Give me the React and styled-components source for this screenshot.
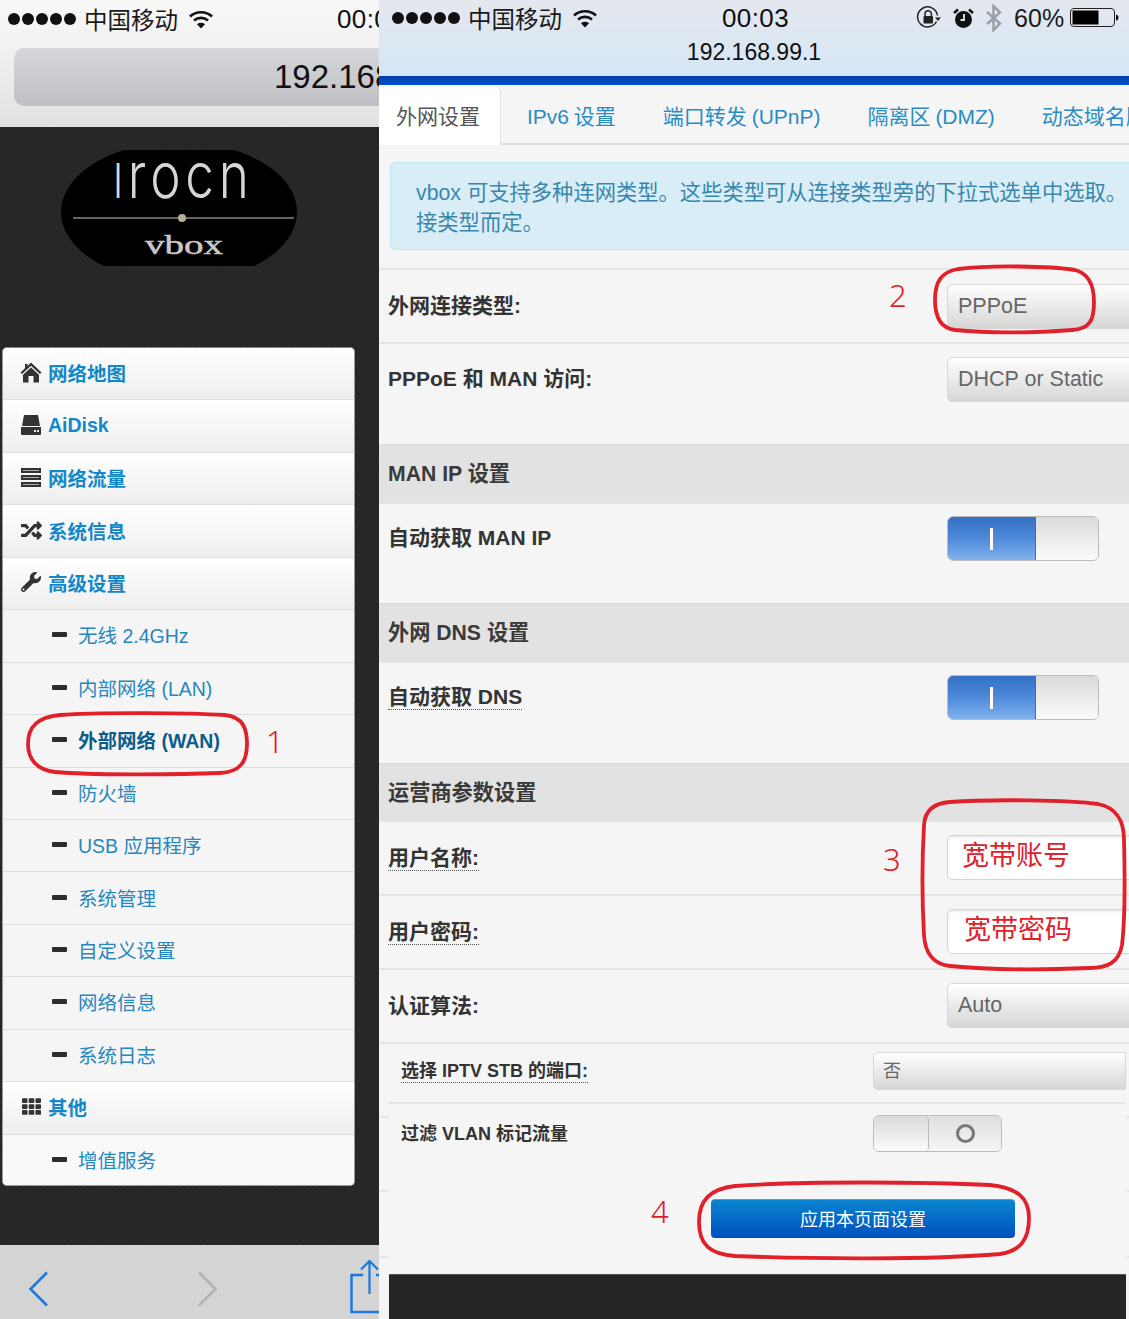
import React from 'react';
import styled, { createGlobalStyle } from 'styled-components';
import { FaRandom, FaWrench, FaTh } from 'react-icons/fa';

const SANS = `"Liberation Sans", "Noto Sans CJK SC", sans-serif`;
const RED = '#e0202a';

const GlobalStyle = createGlobalStyle`
  html, body {
    margin: 0;
    padding: 0;
    background: #f5f5f5;
    overflow: hidden;
  }
  * { box-sizing: border-box; }
`;

const Page = styled.div`
  position: relative;
  display: flex;
  width: 1129px;
  height: 1319px;
  overflow: hidden;
  font-family: ${SANS};
  color: #333;
`;

/* ---------- left phone ---------- */
const LeftPhone = styled.section`
  display: flex;
  flex-direction: column;
  flex: 0 0 379px;
  width: 379px;
  height: 1319px;
  overflow: hidden;
`;
const LeftHeader = styled.header`
  flex: 0 0 127px;
  padding-left: 14px;
  background: linear-gradient(#f8f8f8, #f1f1f1 40%, #e1e1e1);
`;
const StatusRow = styled.div`
  display: flex;
  align-items: center;
  height: 38px;
  margin-left: ${(p) => p.$offset || 0}px;
  white-space: nowrap;
`;
const Dots = styled.span`
  display: flex;
  gap: 2px;
`;
const Dot = styled.i`
  display: block;
  width: 12px;
  height: 12px;
  border-radius: 50%;
  background: #111;
`;
const Carrier = styled.span`
  margin-left: 8px;
  font-size: 23.5px;
  color: #1a1a1a;
`;
const WifiWrap = styled.span`
  display: flex;
  margin-left: 11px;
`;
const Clock = styled.span`
  font-size: 26px;
  font-weight: 500;
  letter-spacing: 0.4px;
  color: #111;
  margin-left: ${(p) => p.$left || 0}px;
`;
const UrlPill = styled.div`
  height: 58px;
  margin-top: 10px;
  width: 500px;
  padding-left: 260px;
  border-radius: 10px 0 0 10px;
  background: linear-gradient(#d6d7da, #bfc0c5);
  font-size: 33px;
  line-height: 58px;
  color: #111;
`;
const DarkBody = styled.div`
  flex: 1;
  padding: 23px 24px 0 2px;
  background-color: #252525;
  background-image: repeating-linear-gradient(45deg, rgba(255, 255, 255, 0.018) 0 2px, transparent 2px 4px);
`;
const LogoWrap = styled.div`
  display: flex;
  height: 197px;
  padding-left: 57px;
`;
const NavCard = styled.nav`
  display: flex;
  flex-direction: column;
  width: 353px;
  height: 839px;
  border: 1px solid #9a9a9a;
  border-top-color: #888;
  border-radius: 5px;
  overflow: hidden;
  background: #f5f5f5;
`;
const NavRow = styled.a`
  display: flex;
  align-items: center;
  flex: 0 0 52.45px;
  padding: 0 0 2px ${(p) => (p.$sub ? 49 : 16)}px;
  border-bottom: 1px solid #dedede;
  background: ${(p) => (p.$sub ? '#f5f5f5' : 'linear-gradient(#ffffff, #eeeeee)')};
  font-size: 19.5px;
  font-weight: ${(p) => (p.$sub && !p.$active ? 400 : 700)};
  color: ${(p) => (p.$active ? '#0c5c8c' : p.$sub ? '#2787c0' : '#1388c9')};

  &:last-child {
    background: #f9f9f9;
    border-bottom: none;
  }
`;
const NavIcon = styled.span`
  display: flex;
  justify-content: center;
  flex: 0 0 24px;
  margin-right: 5px;
  color: #333;
`;
const SubDash = styled.i`
  display: block;
  flex: 0 0 15px;
  height: 5px;
  margin-right: 11px;
  border-radius: 1px;
  background: #2c2c2c;
`;
const BottomBar = styled.footer`
  display: flex;
  align-items: flex-start;
  flex: 0 0 74px;
  padding: 15px 0 0 28px;
  background: #d4d4d4;
`;
const BackBtn = styled.span`
  display: flex;
  margin: ${(p) => p.$top}px ${(p) => p.$right}px 0 0;
`;

/* ---------- right phone ---------- */
const RightPhone = styled.section`
  display: flex;
  flex-direction: column;
  flex: 0 0 750px;
  width: 750px;
  height: 1319px;
  overflow: hidden;
  background: #f5f5f5;
`;
const RightHeader = styled.header`
  flex: 0 0 76px;
  background: linear-gradient(#e4e8ee, #d6e6f6);
`;
const RightStatus = styled.div`
  display: flex;
  align-items: center;
  height: 36px;
  padding-left: 13px;
  white-space: nowrap;
`;
const RightIcons = styled.span`
  display: flex;
  align-items: center;
  margin-left: 127px;
`;
const IconGap = styled.span`
  flex: 0 0 11px;
`;
const Percent = styled.span`
  margin: 0 6px 0 11px;
  font-size: 25px;
  color: #1a1a1a;
`;
const Address = styled.div`
  font-size: 23px;
  line-height: 32px;
  text-align: center;
  color: #111;
`;
const BlueBar = styled.div`
  flex: 0 0 9px;
  background: linear-gradient(#0340a8, #0450cc);
`;
const Tabs = styled.div`
  display: flex;
  flex: 0 0 60px;
  gap: 1px;
  padding-top: 2px;
  border-bottom: 2px solid #dedede;
  white-space: nowrap;
`;
const Tab = styled.a`
  display: block;
  padding: ${(p) => (p.$active ? '4px 20px 0 17px' : '4px 23px 0')};
  margin-right: ${(p) => (p.$active ? 2 : 0)}px;
  margin-bottom: ${(p) => (p.$active ? -2 : 0)}px;
  border-radius: 0 6px 0 0;
  background: ${(p) => (p.$active ? '#fff' : 'transparent')};
  border-right: ${(p) => (p.$active ? '1px solid #e2e2e2' : 'none')};
  font-size: 21px;
  word-spacing: -1px;
  line-height: 52px;
  color: ${(p) => (p.$active ? '#555' : '#2a8cc4')};
`;
const Alert = styled.div`
  flex: 0 0 88px;
  width: 900px;
  margin: 17px 0 18px 11px;
  padding: 15px 0 0 25px;
  border: 1px solid #bce8f1;
  border-radius: 5px;
  background: #d9edf7;
  font-size: 21.3px;
  line-height: 30px;
  color: #3a87ad;
`;
const FormRow = styled.div`
  display: grid;
  grid-template-columns: 559px 240px;
  flex: 0 0 ${(p) => p.$height}px;
  padding: ${(p) => p.$top}px 0 0 9px;
  border-top: 2px solid #e4e4e4;
`;
const Label = styled.div`
  align-self: start;
  height: 45px;
  font-size: 21px;
  font-weight: 700;
  line-height: ${(p) => p.$line || 43}px;
  color: #333;
`;
const Hint = styled.span`
  border-bottom: 1px dotted #555;
  padding-bottom: 1px;
`;
const SectionHead = styled.div`
  flex: 0 0 ${(p) => p.$height}px;
  padding-left: 9px;
  border-top: 2px solid #dcdcdc;
  background: #e2e2e2;
  font-size: 21.2px;
  font-weight: 700;
  line-height: ${(p) => p.$height - 2}px;
  color: #3a3a3a;
`;
const SelectBox = styled.div`
  width: ${(p) => p.$width || 240}px;
  height: ${(p) => p.$height || 45}px;
  padding-left: ${(p) => p.$pad || 10}px;
  border: 1px solid #d8d8d8;
  border-radius: 5px 0 0 5px;
  background: linear-gradient(#ffffff, #d6d6d6);
  font-size: ${(p) => p.$size || 21.5}px;
  line-height: ${(p) => (p.$height || 45) - 2}px;
  color: #666;
`;
const TextField = styled.div`
  width: 240px;
  height: 45px;
  padding-left: ${(p) => p.$pad}px;
  border: 1px solid #d4d4d4;
  border-radius: 5px 0 0 5px;
  background: #fff;
  box-shadow: inset 0 2px 2px rgba(0, 0, 0, 0.08);
  font-size: 27px;
  line-height: 40px;
  color: ${RED};
`;
const Switch = styled.div`
  display: flex;
  width: ${(p) => p.$width}px;
  height: ${(p) => p.$height}px;
  border: 1px solid #bcbcbc;
  border-radius: 6px;
  overflow: hidden;
`;
const SwitchOn = styled.div`
  display: flex;
  align-items: center;
  justify-content: center;
  flex: 0 0 88px;
  background: linear-gradient(#3471c4, #4d88d8 48%, #80b2ec);
  border-right: 1px solid #3d6fa8;
`;
const OnBar = styled.i`
  display: block;
  width: 3px;
  height: 22px;
  background: #fff;
`;
const Knob = styled.div`
  flex: ${(p) => (p.$grow ? 1 : '0 0 55px')};
  background: linear-gradient(#dadada, #fbfbfb);
  border-right: ${(p) => (p.$grow ? 'none' : '1px solid #bbb')};
  border-radius: 0 4px 4px 0;
`;
const SwitchOff = styled.div`
  display: flex;
  align-items: center;
  justify-content: center;
  flex: 1;
  background: linear-gradient(#dedede, #f6f6f6);
`;
const OffRing = styled.i`
  display: block;
  width: 19px;
  height: 19px;
  border: 3px solid #777;
  border-radius: 50%;
`;
const LowerArea = styled.div`
  display: flex;
  flex-direction: column;
  flex: 1;
  padding: 0 3px 0 10px;
  border-top: 2px solid #e4e4e4;
  background-image: linear-gradient(#e6e6e6, #e6e6e6), linear-gradient(#e6e6e6, #e6e6e6), linear-gradient(#e6e6e6, #e6e6e6);
  background-size: 100% 2px;
  background-repeat: no-repeat;
  background-position: 0 72px, 0 146px, 0 212px;
`;
const InnerPanel = styled.div`
  flex: 0 0 230px;
  background: #f5f5f5;
`;
const InnerRow = styled.div`
  display: grid;
  grid-template-columns: 472px 1fr;
  height: ${(p) => p.$height}px;
  padding: ${(p) => p.$top}px 0 0 12px;
  border-bottom: ${(p) => (p.$line ? '2px solid #e4e4e4' : 'none')};
`;
const InnerLabel = styled.div`
  font-size: 18px;
  font-weight: 700;
  line-height: 38px;
  color: #333;
`;
const ApplyRow = styled.div`
  display: flex;
  padding: 37px 0 0 322px;
`;
const ApplyButton = styled.button`
  width: 304px;
  height: 39px;
  padding: 0 0 2px;
  border: none;
  border-top: 1px solid #4aa0dc;
  border-radius: 4px;
  background: linear-gradient(#0a84cf, #0050c0);
  font-family: ${SANS};
  font-size: 18px;
  color: #fff;
`;
const DarkFooter = styled.div`
  flex: 1;
  background: #252525;
  border-top: 1px solid #555;
`;

/* ---------- annotations, drawn over the screenshots ---------- */
const Marks = styled.svg`
  position: absolute;
  left: 0;
  top: 0;
  pointer-events: none;
`;
const Note = styled.span`
  position: absolute;
  left: ${(p) => p.$x}px;
  top: ${(p) => p.$y}px;
  font-family: "Noto Sans", sans-serif;
  font-size: 31px;
  font-weight: 300;
  line-height: 36px;
  color: ${RED};
`;

const Wifi = () => (
  <svg width="24" height="19" viewBox="0 0 24 19">
    <path d="M1 6.5C7 0.8 17 0.8 23 6.5" fill="none" stroke="#111" strokeWidth="2.6" />
    <path d="M5 10.5C9 7 15 7 19 10.5" fill="none" stroke="#111" strokeWidth="2.6" />
    <path d="M8 14.2L12 18.5L16 14.2C13.5 12.4 10.5 12.4 8 14.2Z" fill="#111" />
  </svg>
);

const HomeIcon = () => (
  <svg width="22" height="21" viewBox="0 0 22 21" fill="#333">
    <path d="M11 0.5L21.500 10.500L20 12L11 3.800L2 12L0.500 10.500L5 6.200V2H7.500V3.900Z" />
    <path d="M11 5.500L19 12.800V20.500H13.500V14H8.500V20.500H3V12.800Z" />
  </svg>
);

const HddIcon = () => (
  <svg width="22" height="21" viewBox="0 0 22 21" fill="#333">
    <path d="M4 0H18L20 11H2Z" />
    <path d="M1 12H21V19Q21 20 20 20H2Q1 20 1 19Z" />
    <rect x="14" y="15" width="2" height="2" fill="#eee" />
    <rect x="17" y="15" width="2" height="2" fill="#eee" />
  </svg>
);

const ServerIcon = () => (
  <svg width="22" height="19" viewBox="0 0 22 19">
    <rect x="1" y="0" width="20" height="5" fill="#333" />
    <rect x="1" y="7" width="20" height="5" fill="#333" />
    <rect x="1" y="14" width="20" height="5" fill="#333" />
    <rect x="3" y="2" width="16" height="1" fill="#aaa" />
    <rect x="3" y="9" width="16" height="1" fill="#aaa" />
    <rect x="3" y="16" width="16" height="1" fill="#aaa" />
  </svg>
);

const Logo = () => (
  <svg width="240" height="116" viewBox="0 0 240 116">
    <ellipse cx="120" cy="62" rx="118" ry="70" fill="#000" />
    <g transform="translate(54 48) scale(0.8 1)">
      <text fill="#d6d6d6" fontFamily="Inter, sans-serif" fontWeight="300" fontSize="64" letterSpacing="6">
        <tspan fontSize="48">I</tspan>rocn
      </text>
    </g>
    <line x1="14" y1="68" x2="235" y2="68" stroke="#8b8472" strokeWidth="1.5" />
    <circle cx="123" cy="68" r="4" fill="#b5ad95" />
    <text x="86" y="104" fill="#c8c8c8" stroke="#c8c8c8" strokeWidth="0.5" fontFamily="'Liberation Serif', serif" fontSize="28" textLength="78" lengthAdjust="spacingAndGlyphs">vbox</text>
  </svg>
);

const RotationLock = () => (
  <svg width="26" height="24" viewBox="0 0 26 24">
    <path d="M20.500 15.500A10 10 0 1 1 21.500 9.500" fill="none" stroke="#222" strokeWidth="1.500" />
    <path d="M19 11.500H25L22 15Z" fill="#222" />
    <path d="M9 10V8a3.200 3.200 0 0 1 6.400 0V10" fill="none" stroke="#222" strokeWidth="1.500" />
    <rect x="7.500" y="10" width="9.500" height="7.500" rx="1" fill="#222" />
  </svg>
);

const Alarm = () => (
  <svg width="21" height="21" viewBox="0 0 21 21">
    <circle cx="10.500" cy="11.500" r="8.500" fill="#111" />
    <path d="M1 5L5 1.500M20 5L16 1.500" stroke="#111" strokeWidth="2.500" />
    <path d="M11 6V12H7.500" fill="none" stroke="#dfe8f1" strokeWidth="1.800" />
  </svg>
);

const BluetoothSvg = styled.svg`
  margin-left: 11px;
`;

const Bluetooth = () => (
  <BluetoothSvg width="18" height="28" viewBox="0 0 18 28">
    <path d="M2 8L15 19.500L8.500 26V2L15 8.500L2 20" fill="none" stroke="#9aa0a6" strokeWidth="2.500" />
  </BluetoothSvg>
);

const Battery = () => (
  <svg width="50" height="20" viewBox="0 0 50 20">
    <rect x="0.500" y="0.500" width="44" height="18" rx="3.500" fill="none" stroke="#222" />
    <rect x="2.500" y="2.500" width="26" height="14" fill="#000" />
    <path d="M46 6.500Q48.500 7 48.500 9.500T46 12.500Z" fill="#111" />
  </svg>
);

const Signal = () => (
  <Dots>
    {[0, 1, 2, 3, 4].map((i) => (
      <Dot key={i} />
    ))}
  </Dots>
);

const NAV = [
  { label: '网络地图', icon: <HomeIcon /> },
  { label: 'AiDisk', icon: <HddIcon /> },
  { label: '网络流量', icon: <ServerIcon /> },
  { label: '系统信息', icon: <FaRandom size={21} /> },
  { label: '高级设置', icon: <FaWrench size={20} /> },
  { label: '无线 2.4GHz', sub: true },
  { label: '内部网络 (LAN)', sub: true },
  { label: '外部网络 (WAN)', sub: true, active: true },
  { label: '防火墙', sub: true },
  { label: 'USB 应用程序', sub: true },
  { label: '系统管理', sub: true },
  { label: '自定义设置', sub: true },
  { label: '网络信息', sub: true },
  { label: '系统日志', sub: true },
  { label: '其他', icon: <FaTh size={19} /> },
  { label: '增值服务', sub: true },
];

const TABS = ['外网设置', 'IPv6 设置', '端口转发 (UPnP)', '隔离区 (DMZ)', '动态域名服务'];

function App() {
  return (
    <Page>
      <GlobalStyle />
      <LeftPhone>
        <LeftHeader>
          <StatusRow $offset={-6}>
            <Signal />
            <Carrier>中国移动</Carrier>
            <WifiWrap>
              <Wifi />
            </WifiWrap>
            <Clock $left={124}>00:03</Clock>
          </StatusRow>
          <UrlPill>192.168.99.1</UrlPill>
        </LeftHeader>
        <DarkBody>
          <LogoWrap>
            <Logo />
          </LogoWrap>
          <NavCard>
            {NAV.map((item) => (
              <NavRow key={item.label} $sub={item.sub} $active={item.active}>
                {item.sub ? <SubDash /> : <NavIcon>{item.icon}</NavIcon>}
                {item.label}
              </NavRow>
            ))}
          </NavCard>
        </DarkBody>
        <BottomBar>
          <BackBtn $top={11} $right={148}>
            <svg width="21" height="36" viewBox="0 0 21 36">
              <path d="M19 1.500L2.500 18L19 34.500" fill="none" stroke="#1a78e0" strokeWidth="2.500" />
            </svg>
          </BackBtn>
          <BackBtn $top={11} $right={132}>
            <svg width="21" height="36" viewBox="0 0 21 36">
              <path d="M2 1.500L18.500 18L2 34.500" fill="none" stroke="#b2b2b2" strokeWidth="2.500" />
            </svg>
          </BackBtn>
          <BackBtn $top={0} $right={0}>
            <svg width="40" height="54" viewBox="0 0 40 54">
              <path d="M13 15H1.500V52H38V15H26" fill="none" stroke="#1a78e0" strokeWidth="2.500" />
              <path d="M19.500 1V34M11 9.500L19.500 1L28 9.500" fill="none" stroke="#1a78e0" strokeWidth="2.200" />
            </svg>
          </BackBtn>
        </BottomBar>
      </LeftPhone>

      <RightPhone>
        <RightHeader>
          <RightStatus>
            <Signal />
            <Carrier>中国移动</Carrier>
            <WifiWrap>
              <Wifi />
            </WifiWrap>
            <Clock $left={125}>00:03</Clock>
            <RightIcons>
              <RotationLock />
              <IconGap />
              <Alarm />
              <Bluetooth />
              <Percent>60%</Percent>
              <Battery />
            </RightIcons>
          </RightStatus>
          <Address>192.168.99.1</Address>
        </RightHeader>
        <BlueBar />
        <Tabs>
          {TABS.map((t, i) => (
            <Tab key={t} $active={i === 0}>
              {t}
            </Tab>
          ))}
        </Tabs>
        <Alert>
          vbox 可支持多种连网类型。这些类型可从连接类型旁的下拉式选单中选取。
          <br />
          接类型而定。
        </Alert>
        <FormRow $height={74} $top={14}>
          <Label>外网连接类型:</Label>
          <SelectBox>PPPoE</SelectBox>
        </FormRow>
        <FormRow $height={102} $top={13}>
          <Label>PPPoE 和 MAN 访问:</Label>
          <SelectBox>DHCP or Static</SelectBox>
        </FormRow>
        <SectionHead $height={58}>MAN IP 设置</SectionHead>
        <FormRow $height={101} $top={12}>
          <Label>自动获取 MAN IP</Label>
          <Switch $width={152} $height={45}>
            <SwitchOn>
              <OnBar />
            </SwitchOn>
            <Knob $grow />
          </Switch>
        </FormRow>
        <SectionHead $height={58}>外网 DNS 设置</SectionHead>
        <FormRow $height={102} $top={12}>
          <Label>
            <Hint>自动获取 DNS</Hint>
          </Label>
          <Switch $width={152} $height={45}>
            <SwitchOn>
              <OnBar />
            </SwitchOn>
            <Knob $grow />
          </Switch>
        </FormRow>
        <SectionHead $height={57}>运营商参数设置</SectionHead>
        <FormRow $height={74} $top={13}>
          <Label $line={45}>
            <Hint>用户名称:</Hint>
          </Label>
          <TextField $pad={14}>宽带账号</TextField>
        </FormRow>
        <FormRow $height={74} $top={13}>
          <Label $line={45}>
            <Hint>用户密码:</Hint>
          </Label>
          <TextField $pad={16}>宽带密码</TextField>
        </FormRow>
        <FormRow $height={74} $top={13}>
          <Label $line={45}>认证算法:</Label>
          <SelectBox>Auto</SelectBox>
        </FormRow>
        <LowerArea>
          <InnerPanel>
            <InnerRow $height={60} $top={8} $line>
              <InnerLabel>
                <Hint>选择 IPTV STB 的端口:</Hint>
              </InnerLabel>
              <SelectBox $height={38} $width={253} $size={18} $pad={9}>否</SelectBox>
            </InnerRow>
            <InnerRow $height={58} $top={11}>
              <InnerLabel>过滤 VLAN 标记流量</InnerLabel>
              <Switch $width={129} $height={37}>
                <Knob />
                <SwitchOff>
                  <OffRing />
                </SwitchOff>
              </Switch>
            </InnerRow>
            <ApplyRow>
              <ApplyButton>应用本页面设置</ApplyButton>
            </ApplyRow>
          </InnerPanel>
          <DarkFooter />
        </LowerArea>
      </RightPhone>

      <Marks width="1129" height="1319" viewBox="0 0 1129 1319" fill="none" stroke={RED} strokeWidth="3.800">
        <path d="M60 715C100 712 190 713 225 715C244 717 247 730 247 744C247 762 240 772 220 773C170 775 90 775 55 772C36 770 28 758 28 744C28 726 38 717 60 715Z" />
        <path d="M958 269C990 265 1050 266 1075 270C1091 274 1094 290 1094 302C1094 320 1090 329 1072 330C1030 333 985 333 955 330C939 328 935 315 935 300C935 282 941 272 958 269Z" />
        <path d="M950 802C990 799 1070 800 1098 804C1118 808 1124 822 1124 840C1125 880 1125 920 1122 945C1119 962 1108 968 1090 968C1040 970 990 970 950 966C932 964 925 952 924 935C922 900 922 860 924 825C925 810 934 803 950 802Z" />
        <path d="M735 1186C800 1181 930 1182 990 1185C1018 1188 1029 1198 1029 1218C1029 1240 1020 1251 1000 1254C930 1260 810 1259 735 1256C710 1254 699 1245 699 1222C699 1200 710 1189 735 1186Z" />
      </Marks>
      <Note $x={266} $y={723}>1</Note>
      <Note $x={889} $y={277}>2</Note>
      <Note $x={883} $y={841}>3</Note>
      <Note $x={651} $y={1193}>4</Note>
    </Page>
  );
}

export default App;
